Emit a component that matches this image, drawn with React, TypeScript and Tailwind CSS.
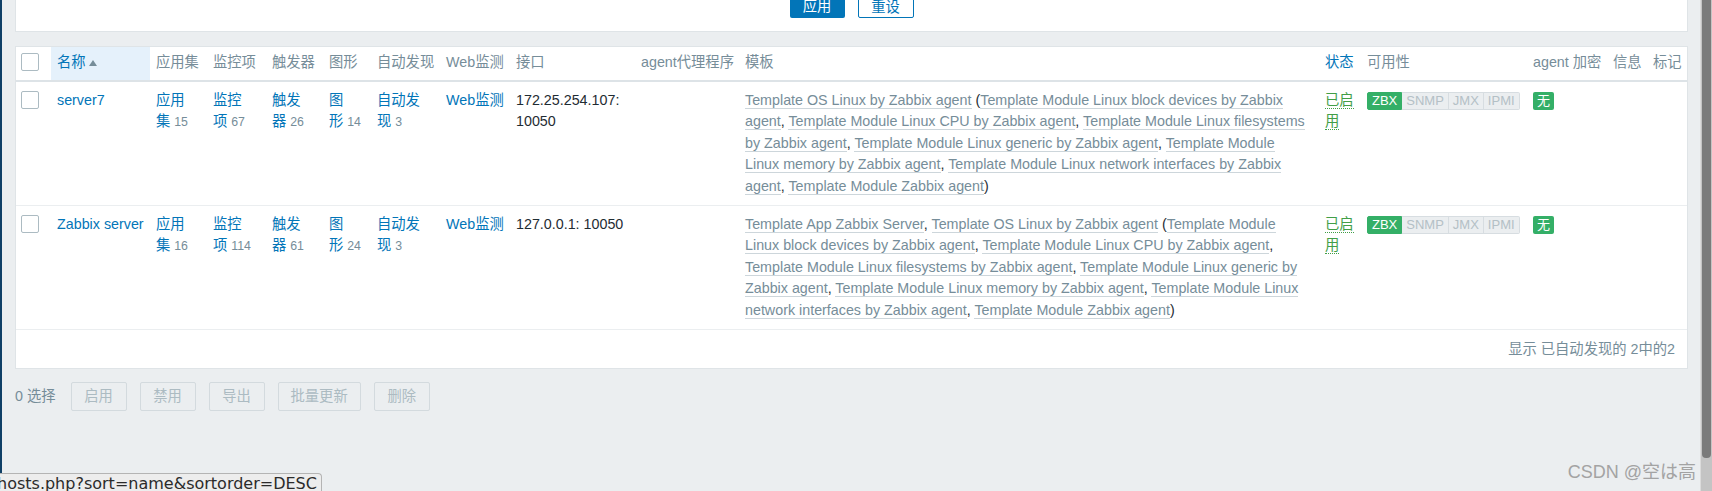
import { Fragment } from 'react';

type Tpl = { name: string; children?: string[] };

const linuxModules = [
  'Template Module Linux block devices by Zabbix agent',
  'Template Module Linux CPU by Zabbix agent',
  'Template Module Linux filesystems by Zabbix agent',
  'Template Module Linux generic by Zabbix agent',
  'Template Module Linux memory by Zabbix agent',
  'Template Module Linux network interfaces by Zabbix agent',
  'Template Module Zabbix agent',
];

const hosts = [
  {
    name: 'server7',
    counts: [15, 67, 26, 14, 3],
    iface: '172.25.254.107: 10050',
    templates: [{ name: 'Template OS Linux by Zabbix agent', children: linuxModules }] as Tpl[],
  },
  {
    name: 'Zabbix server',
    counts: [16, 114, 61, 24, 3],
    iface: '127.0.0.1: 10050',
    templates: [
      { name: 'Template App Zabbix Server' },
      { name: 'Template OS Linux by Zabbix agent', children: linuxModules },
    ] as Tpl[],
  },
];

// labels split the way they wrap in the narrow columns
const entities: [string, string][] = [
  ['应用', '集'],
  ['监控', '项'],
  ['触发', '器'],
  ['图', '形'],
  ['自动发', '现'],
];

const colWidths = [35, 99, 57, 59, 57, 48, 69, 70, 125, 104, 580, 42, 166, 80, 40, 40];

function Checkbox() {
  return <span className="mt-[1px] block h-[18px] w-[18px] rounded-[2px] border border-[#acbbc2] bg-white" />;
}

function TLink({ children }: { children: string }) {
  return <span className="border-b border-[#cdd6db] text-[#768d99]">{children}</span>;
}

function Templates({ list }: { list: Tpl[] }) {
  return (
    <>
      {list.map((t, i) => (
        <Fragment key={t.name}>
          {i > 0 && ', '}
          <TLink>{t.name}</TLink>
          {t.children && (
            <>
              {' ('}
              {t.children.map((c, j) => (
                <Fragment key={c}>
                  {j > 0 && ', '}
                  <TLink>{c}</TLink>
                </Fragment>
              ))}
              {')'}
            </>
          )}
        </Fragment>
      ))}
    </>
  );
}

function Availability() {
  const grey = ['SNMP', 'JMX', 'IPMI'];
  return (
    <div className="mt-[2px] flex h-[18px] text-[13px] leading-[16px]">
      <span className="rounded-l-[2px] border border-[#34af67] bg-[#34af67] px-[4px] text-white">ZBX</span>
      {grey.map((g, i) => (
        <span
          key={g}
          className={
            'border-y border-r border-[#d7dde1] bg-[#ebeef0] px-[4px] text-[#b4c0c6] ' +
            (i === grey.length - 1 ? 'rounded-r-[2px]' : '')
          }
        >
          {g}
        </span>
      ))}
    </div>
  );
}

export default function App() {
  const th = 'whitespace-nowrap pl-[6px] pr-[5px] pt-[5px] pb-[6px] text-left align-top font-normal text-[#768d99]';
  const td = 'pl-[6px] pr-[5px] pt-[8px] pb-[7px] align-top';

  return (
    <div className="relative flex h-[491px] w-[1712px] overflow-hidden bg-[#ebeef0] font-['Liberation_Sans','Noto_Sans_CJK_SC',sans-serif] text-[14.3px] leading-[21.6px] text-[#1f2c33]">
      <div className="w-[2px] shrink-0 bg-[#0f3f66]" />

      <main className="min-w-0 flex-1 pl-[13px] pr-[12px]">
        {/* filter form, scrolled mostly out of view */}
        <div className="flex h-[32px] items-end justify-center gap-[13px] border-x border-b border-[#dfe4e7] bg-white pb-[13px]">
          <button type="button" className="h-[22px] w-[55px] rounded-b-[2px] bg-[#0275b8] text-white">
            应用
          </button>
          <button type="button" className="h-[22px] w-[56px] rounded-[2px] border border-[#0275b8] bg-white text-[#0275b8]">
            重设
          </button>
        </div>

        <div className="mt-[14px] border border-[#dfe4e7] bg-white">
          <table className="w-full table-fixed border-collapse">
            <colgroup>
              {colWidths.map((w, i) => (
                <col key={i} style={{ width: w }} />
              ))}
            </colgroup>
            <thead>
              <tr className="border-b-2 border-[#dde3e7]">
                <th className="pl-[5px] pr-[5px] pt-[5px] pb-[6px] align-top">
                  <Checkbox />
                </th>
                <th className={th + ' bg-[#e5f1fb]'}>
                  <span className="text-[#0275b8]">名称</span>
                  <span className="ml-[3px] inline-block h-0 w-0 border-x-[4px] border-b-[6px] border-x-transparent border-b-[#768d99] align-middle" />
                </th>
                <th className={th}>应用集</th>
                <th className={th}>监控项</th>
                <th className={th}>触发器</th>
                <th className={th}>图形</th>
                <th className={th}>自动发现</th>
                <th className={th}>Web监测</th>
                <th className={th}>接口</th>
                <th className={th}>agent代理程序</th>
                <th className={th}>模板</th>
                <th className={th}>
                  <span className="text-[#0275b8]">状态</span>
                </th>
                <th className={th}>可用性</th>
                <th className={th}>agent 加密</th>
                <th className={th}>信息</th>
                <th className={th}>标记</th>
              </tr>
            </thead>
            <tbody>
              {hosts.map((h) => (
                <tr key={h.name} className="border-b border-[#ebeef0]">
                  <td className="pl-[5px] pr-[5px] pt-[8px] pb-[7px] align-top">
                    <Checkbox />
                  </td>
                  <td className={td}>
                    <span className="text-[#0275b8]">{h.name}</span>
                  </td>
                  {entities.map(([a, b], i) => (
                    <td key={a} className={td}>
                      <span className="text-[#0275b8]">
                        {a}
                        <br />
                        {b}
                      </span>{' '}
                      <span className="text-[12.3px] text-[#768d99]">{h.counts[i]}</span>
                    </td>
                  ))}
                  <td className={td + ' whitespace-nowrap'}>
                    <span className="text-[#0275b8]">Web监测</span>
                  </td>
                  <td className={td}>{h.iface}</td>
                  <td className={td} />
                  <td className="pl-[6px] pr-[11px] pt-[8px] pb-[7px] align-top">
                    <Templates list={h.templates} />
                  </td>
                  <td className={td}>
                    <span className="border-b border-dotted border-[#429e47] text-[#429e47]">已启用</span>
                  </td>
                  <td className={td}>
                    <Availability />
                  </td>
                  <td className={td}>
                    <span className="mt-[2px] block h-[18px] w-[21px] rounded-[2px] bg-[#34af67] text-center text-[13px] leading-[18px] text-white">
                      无
                    </span>
                  </td>
                  <td className={td} />
                  <td className={td} />
                </tr>
              ))}
              <tr>
                <td colSpan={16} className="pt-[9px] pb-[8px] pr-[12px] text-right text-[#768d99]">
                  显示 已自动发现的 2中的2
                </td>
              </tr>
            </tbody>
          </table>
        </div>

        <div className="mt-[13px] flex items-center">
          <span className="mr-[15px] text-[#768d99]">0 选择</span>
          <div className="flex gap-[13px]">
            {['启用', '禁用', '导出', '批量更新', '删除'].map((b) => (
              <button
                key={b}
                type="button"
                disabled
                className="h-[29px] min-w-[56px] rounded-[2px] border border-[#d3dade] bg-[#ebeef0] px-[12px] text-[#acbbc2]"
              >
                {b}
              </button>
            ))}
          </div>
        </div>
      </main>

      <div className="w-[12px] shrink-0 border-l border-[#dcdcdc] bg-[#c4c4c4]">
        <div className="mx-[1px] h-[458px] rounded-b-[4px] bg-[#7b7b7b]" />
      </div>

      {/* browser status bubble */}
      <div className="absolute left-0 top-[473px] h-[20px] w-[322px] overflow-hidden rounded-tr-[4px] border-t border-r border-[#b4b4b4] bg-[#ededed] font-['DejaVu_Sans',sans-serif] text-[16px] leading-[19px] text-[#2b2b2b]">
        <div className="-ml-[3px] whitespace-nowrap">hosts.php?sort=name&amp;sortorder=DESC</div>
      </div>

      <div className="absolute right-[16px] top-[460px] text-[18px] leading-[24px] text-[#a3a3a3]">CSDN @空は高</div>
    </div>
  );
}
